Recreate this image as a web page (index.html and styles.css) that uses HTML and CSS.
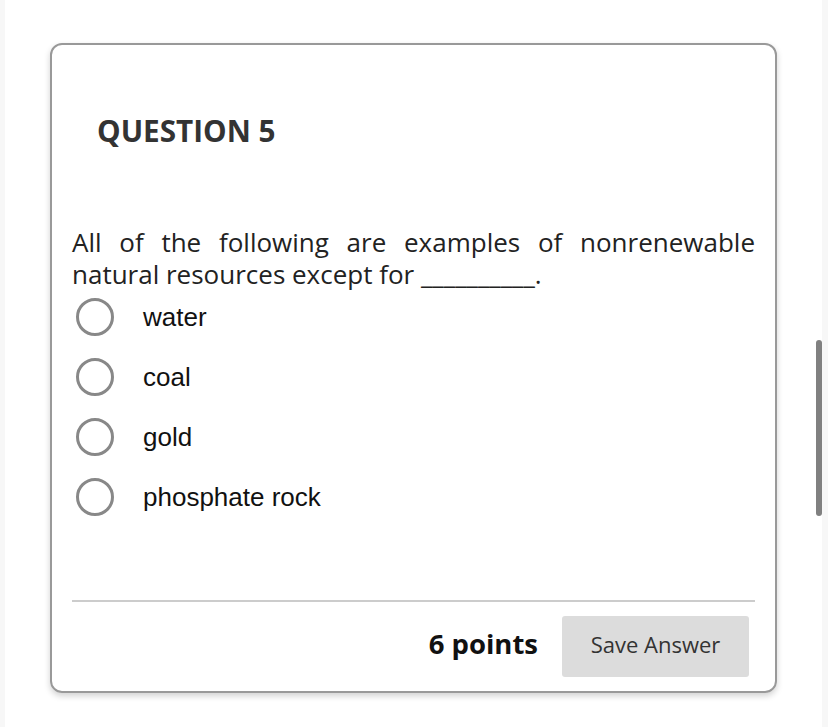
FILE: index.html
```html
<!DOCTYPE html>
<html>
<head>
<meta charset="utf-8">
<link rel="stylesheet" href="styles.css">
</head>
<body>
<div class="page">
  <div class="edge"></div>
  <main class="main">
    <section class="card">
      <h2 class="title">QUESTION 5</h2>
      <p class="question">All of the following are examples of nonrenewable natural resources except for __________.</p>
      <ul class="options">
        <li class="option"><span class="radio"></span><span class="label">water</span></li>
        <li class="option"><span class="radio"></span><span class="label">coal</span></li>
        <li class="option"><span class="radio"></span><span class="label">gold</span></li>
        <li class="option"><span class="radio"></span><span class="label">phosphate rock</span></li>
      </ul>
      <div class="footer">
        <span class="points">6 points</span>
        <button class="save">Save Answer</button>
      </div>
    </section>
  </main>
  <div class="edge right"></div>
  <div class="thumb"></div>
</div>
</body>
</html>
```
FILE: styles.css
```css
html, body {
  margin: 0;
  padding: 0;
  background: #fff;
}
.page {
  display: flex;
  width: 828px;
  height: 727px;
  position: relative;
  overflow: hidden;
}
.edge {
  width: 5px;
  background: #f7f7f7;
  flex: none;
}
.edge.right {
  width: 6px;
}
.main {
  flex: 1;
  padding: 43px 0 0 45px;
}
.card {
  box-sizing: border-box;
  width: 727px;
  height: 650px;
  border: 2px solid #999;
  border-radius: 12px;
  box-shadow: 0 3px 6px rgba(0,0,0,0.18);
  padding: 0 20px;
  display: flex;
  flex-direction: column;
  font-family: "Open Sans", sans-serif;
}
.title {
  margin: 68px 0 0 25px;
  font-size: 29.7px;
  font-weight: 700;
  color: #333;
  line-height: 36px;
}
.question {
  margin: 77px 0 0 0;
  font-size: 26px;
  line-height: 32px;
  color: #222;
  text-align: justify;
}
.options {
  list-style: none;
  margin: 0;
  padding: 0;
}
.option {
  display: flex;
  align-items: center;
  height: 60px;
}
.option:first-child {
  margin-top: -3px;
}
.radio {
  box-sizing: border-box;
  width: 38px;
  height: 38px;
  border: 3px solid #888;
  border-radius: 50%;
  margin-left: 4px;
  flex: none;
}
.label {
  margin-left: 29px;
  font-family: "Liberation Sans", Arial, sans-serif;
  font-size: 26px;
  color: #111;
}
.footer {
  margin-top: auto;
  margin-bottom: 14px;
  border-top: 2px solid #ccc;
  padding-top: 14px;
  display: flex;
  justify-content: flex-end;
  align-items: center;
  padding-right: 6px;
}
.points {
  font-size: 27.5px;
  font-weight: 700;
  color: #111;
  margin-right: 24px;
  position: relative;
  top: -3px;
}
.save {
  width: 187px;
  height: 61px;
  border: none;
  border-radius: 3px;
  background: #dcdcdc;
  color: #333;
  font-family: "Open Sans", sans-serif;
  font-size: 22px;
  padding: 0 0 5px 0;
}
.thumb {
  position: absolute;
  left: 816px;
  top: 340px;
  width: 6px;
  height: 176px;
  border-radius: 3px;
  background: #808080;
}
```
